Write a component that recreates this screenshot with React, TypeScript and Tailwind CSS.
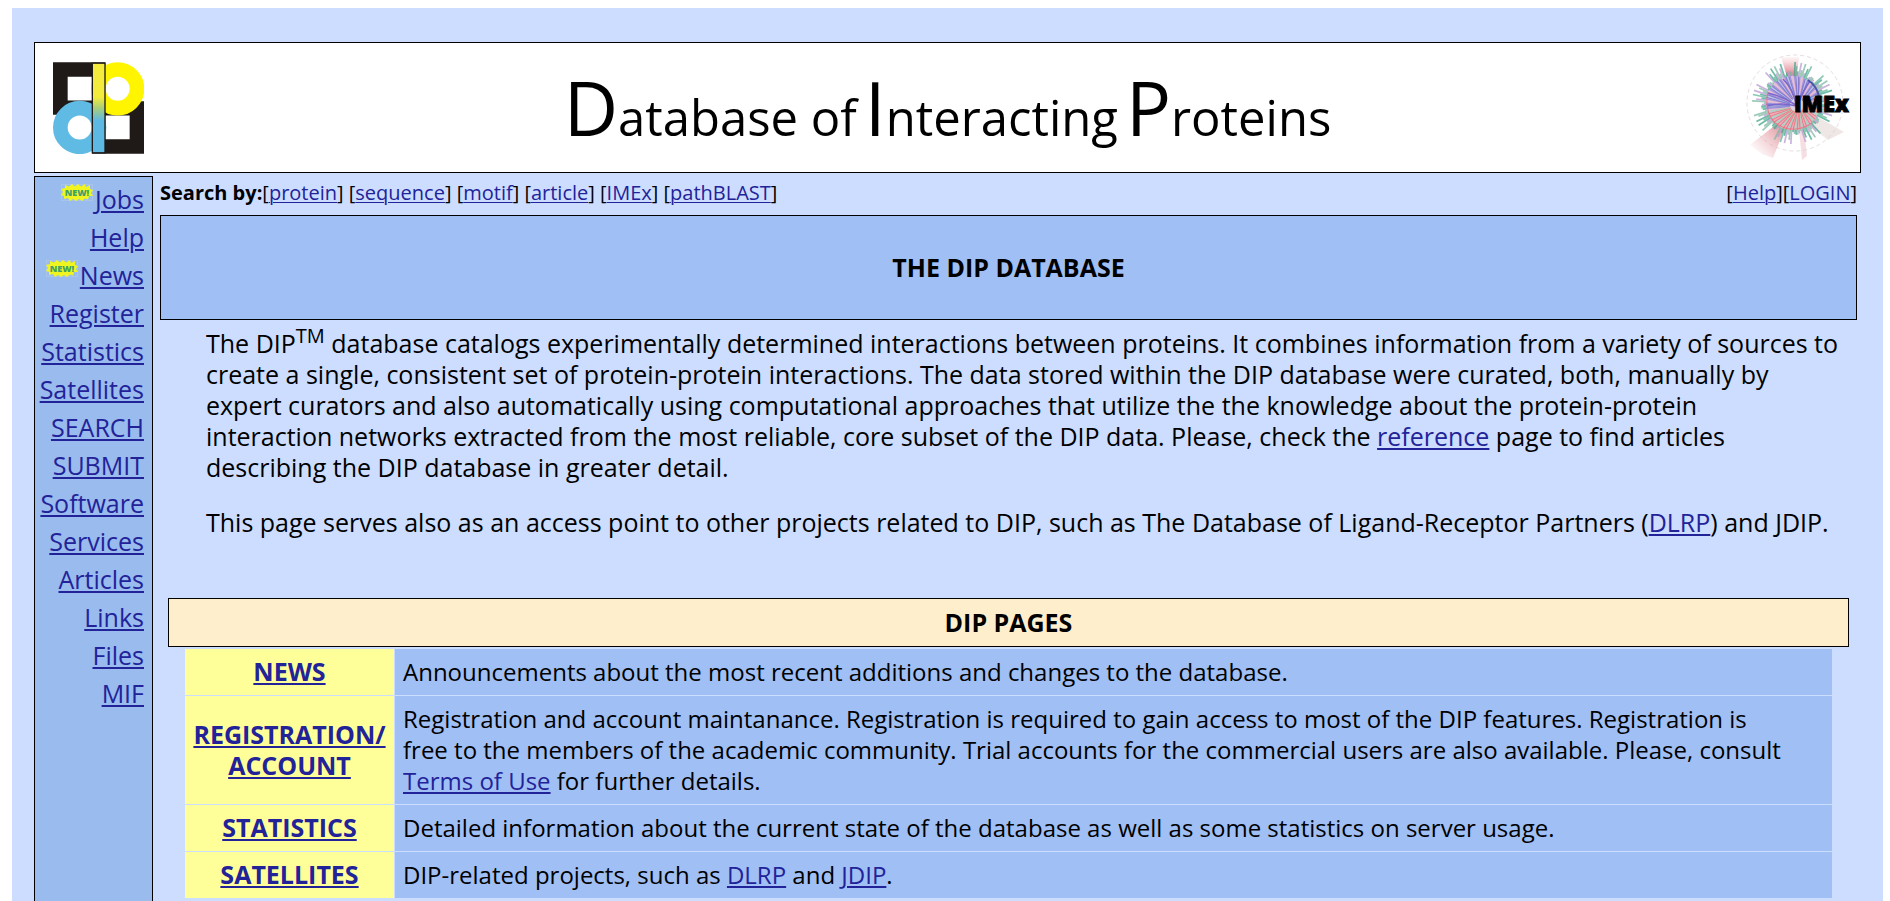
import type { ReactNode } from "react";

const menu = [
  { label: "Jobs", isNew: true },
  { label: "Help" },
  { label: "News", isNew: true },
  { label: "Register" },
  { label: "Statistics" },
  { label: "Satellites" },
  { label: "SEARCH" },
  { label: "SUBMIT" },
  { label: "Software" },
  { label: "Services" },
  { label: "Articles" },
  { label: "Links" },
  { label: "Files" },
  { label: "MIF" },
];

const searches = ["protein", "sequence", "motif", "article", "IMEx", "pathBLAST"];

function A({ children, thin }: { children: ReactNode; thin?: boolean }) {
  return (
    <a
      href="#"
      className={`text-[#222299] underline underline-offset-2 ${thin ? "decoration-1" : "decoration-2"}`}
    >
      {children}
    </a>
  );
}

const pages = [
  {
    name: "NEWS",
    text: "Announcements about the most recent additions and changes to the database.",
  },
  {
    name: "REGISTRATION/ ACCOUNT",
    text: (
      <>
        Registration and account maintanance. Registration is required to gain access to most of the DIP features.
        Registration is <br className="max-xl:hidden" />
        free to the members of the academic community. Trial accounts for the commercial users are also available.
        Please, consult <br className="max-xl:hidden" />
        <A>Terms of Use</A> for further details.
      </>
    ),
  },
  {
    name: "STATISTICS",
    text: "Detailed information about the current state of the database as well as some statistics on server usage.",
  },
  {
    name: "SATELLITES",
    text: (
      <>
        DIP-related projects, such as <A>DLRP</A> and <A>JDIP</A>.
      </>
    ),
  },
];

function DipLogo() {
  return (
    <svg viewBox="0 0 273 275" className="h-[92px] w-[91px]" role="img" aria-label="DIP">
      <defs>
        <linearGradient id="dip-bar" x1="0" y1="0" x2="0" y2="1">
          <stop offset="0.38" stopColor="#f3ec3c" />
          <stop offset="0.5" stopColor="#a9cf77" />
          <stop offset="0.64" stopColor="#5db9e3" />
        </linearGradient>
      </defs>
      <path fill="#1f1a17" fillRule="evenodd" d="M0 0H157V158H0ZM44 44V115H117V44Z" />
      <path fill="#1f1a17" fillRule="evenodd" d="M117 117H273V275H117ZM157 160V231H230V160Z" />
      <circle cx="194" cy="80" r="58" fill="#fff" stroke="#fff500" strokeWidth="44" />
      <circle cx="80" cy="196" r="58" fill="#fff" stroke="#5fbbe4" strokeWidth="44" />
      <rect x="118" y="3" width="38" height="269" fill="url(#dip-bar)" stroke="#1f1a17" strokeWidth="4" />
    </svg>
  );
}

const rayColors = ["#3fa58a", "#7fb8a4", "#e5737f", "#b99ad0", "#2f8f7c", "#8fa8b8", "#66b59b"];
const coreColors = ["#8b7fd6", "#c79be0", "#f08a9c", "#a7c6e8", "#6f62c4", "#e9b7c9", "#9ad0b8"];
const lowerColors = ["#f0606c", "#c9b6dd", "#d94f6b", "#a9cdb9", "#f4a6a6"];

// Spokes of the interaction wheel, one every three degrees.
const spokes = Array.from({ length: 120 }, (_, i) => {
  const angle = (i * 3 * Math.PI) / 180;
  const down = Math.sin(angle) > 0.3;
  return {
    x: Math.cos(angle),
    y: Math.sin(angle),
    outer: 29 + ((i * i * 7 + i * 5) % 15),
    ray: rayColors[(i * i + i * 5) % rayColors.length],
    core: down
      ? lowerColors[(i * i + i * 3) % lowerColors.length]
      : coreColors[(i * i + i * 3) % coreColors.length],
  };
});

function ImexLogo() {
  return (
    <svg viewBox="0 0 116 116" className="h-[116px] w-[116px]" role="img" aria-label="IMEx">
      <defs>
        <filter id="soft">
          <feGaussianBlur stdDeviation="0.7" />
        </filter>
        <linearGradient id="fade-up" x1="0" y1="1" x2="0" y2="0">
          <stop offset="0.3" stopColor="#dc6f80" stopOpacity="0.8" />
          <stop offset="1" stopColor="#e8a0a8" stopOpacity="0.1" />
        </linearGradient>
        <linearGradient id="fade-down" x1="1" y1="0" x2="0" y2="1">
          <stop offset="0.2" stopColor="#dc8790" stopOpacity="0.7" />
          <stop offset="0.9" stopColor="#e8a0a8" stopOpacity="0" />
        </linearGradient>
      </defs>
      <circle cx="53" cy="53" r="48" fill="none" stroke="#e6dee0" strokeDasharray="4 3" />
      <g filter="url(#soft)">
        <path d="M46 30 39 7 57 7 54 30Z" fill="url(#fade-up)" />
        <path d="M36 73 8 95 20 104 31 108 42 80Z" fill="url(#fade-down)" />
        <path d="M57 80 60 110 65 106 62 80Z" fill="#eec0c6" opacity="0.5" />
        <path d="M74 66 102 82 86 90 68 76Z" fill="#d8c4c0" opacity="0.4" />
        {spokes.map((s, i) => (
          <line
            key={i}
            x1={51 + s.x * 23}
            y1={53 + s.y * 23}
            x2={51 + s.x * s.outer}
            y2={53 + s.y * s.outer}
            stroke={s.ray}
            strokeWidth="1.7"
            opacity="0.75"
          />
        ))}
        <circle cx="51" cy="53" r="27" fill="#ddd0ee" />
        {spokes.map((s, i) => (
          <line
            key={i}
            x1={55 + s.x * 7}
            y1={55 + s.y * 7}
            x2={51 + s.x * 27}
            y2={53 + s.y * 27}
            stroke={s.core}
            strokeWidth="1.3"
            opacity="0.75"
          />
        ))}
        <path
          d="M26 43Q40 46 54 55M41 29Q52 40 54 55M68 31Q60 42 56 55M25 56Q40 52 54 56"
          fill="none"
          stroke="#7a68cc"
          strokeWidth="1.6"
        />
        <path d="M66 30Q75 36 77 47" fill="none" stroke="#4a57a8" strokeWidth="2" />
        <path d="M26 42Q22 60 32 72Q50 86 70 73" fill="none" stroke="#ee6a78" strokeWidth="1.2" opacity="0.7" />
      </g>
      <text x="52" y="62" fontSize="22" fontWeight="800" fontFamily="Open Sans, sans-serif" stroke="#000">
        IMEx
      </text>
    </svg>
  );
}

function NewBadge() {
  return (
    <svg
      viewBox="0 0 32 17"
      className="mt-0.5 mr-0.5 inline-block h-[17px] w-[32px] align-text-top"
      role="img"
      aria-label="New"
    >
      <rect x="0.5" y="0.5" width="31" height="16" fill="none" stroke="#a8c4e6" />
      <path
        fill="#f0f520"
        d="M0 5 4 4 4 1 8 2.500 11 0 14 2.500 17 0 20 2.500 24 0 25 3 29 1 29 5 32 6 30 9 32 12 28 12 27 15.500 24 14.500 21 17 18 15 15 17 12 15 9 17 7 14 3 15 3 12 0 11 2 8Z"
      />
      <text x="16" y="12" textAnchor="middle" fontSize="9" fontWeight="800" fill="#3fa06a">
        NEW!
      </text>
    </svg>
  );
}

export default function App() {
  return (
    <div className="flex min-h-screen flex-col bg-white pt-2 pr-[7px] pl-3 font-['Open_Sans','Noto_Sans',sans-serif] text-[25px] leading-[31px] text-black">
      <div className="flex flex-1 flex-col bg-[#ccddff] px-[22px] pt-[34px]">
        <header className="grid grid-cols-[1fr_auto_1fr] items-center border border-black bg-white">
          <div className="pl-[18px]">
            <DipLogo />
          </div>
          <h1 className="flex h-[129px] items-baseline pt-[14px] text-[49px] leading-[100px]">
            <span className="text-[75px]">D</span>atabase of
            <span className="ml-2 text-[75px]">I</span>nteracting
            <span className="ml-2 text-[75px]">P</span>roteins
          </h1>
          <div className="flex justify-end pr-0.5">
            <ImexLogo />
          </div>
        </header>

        <div className="mt-[3px] flex flex-1 items-stretch">
          <nav className="w-[119px] shrink-0 border border-b-0 border-black bg-[#99bbee] pt-[3px] pr-2 text-right">
            <ul>
              {menu.map((item) => (
                <li key={item.label} className="h-[38px] leading-[38px] whitespace-nowrap">
                  {item.isNew && <NewBadge />}
                  <A>{item.label}</A>
                </li>
              ))}
            </ul>
          </nav>

          <main className="min-w-0 flex-1 pr-1 pl-[7px]">
            <div className="flex justify-between pt-px pb-[7px] text-[20px]">
              <div>
                <b>Search by:</b>
                {searches.map((s, i) => (
                  <span key={s}>
                    {i > 0 && " "}[<A thin>{s}</A>]
                  </span>
                ))}
              </div>
              <div>
                [<A thin>Help</A>][<A thin>LOGIN</A>]
              </div>
            </div>

            <h2 className="border border-black bg-[#a0bff5] py-[36px] text-center font-bold">THE DIP DATABASE</h2>

            <div className="pt-2 pr-4 pl-[46px]">
              <p>
                The DIP<sup className="text-[20px] leading-none">TM</sup> database catalogs experimentally determined
                interactions between proteins. It combines information from a variety of sources to{" "}
                <br className="max-xl:hidden" />
                create a single, consistent set of protein-protein interactions. The data stored within the DIP
                database were curated, both, manually by <br className="max-xl:hidden" />
                expert curators and also automatically using computational approaches that utilize the the knowledge
                about the protein-protein <br className="max-xl:hidden" />
                interaction networks extracted from the most reliable, core subset of the DIP data. Please, check the{" "}
                <A>reference</A> page to find articles <br className="max-xl:hidden" />
                describing the DIP database in greater detail.
              </p>
              <p className="mt-6">
                This page serves also as an access point to other projects related to DIP, such as The Database of
                Ligand-Receptor Partners (<A>DLRP</A>) and JDIP.
              </p>
            </div>

            <section className="mt-[60px] px-2">
              <h2 className="border border-black bg-[#ffeecc] py-2 text-center font-bold">DIP PAGES</h2>
              <div className="px-[17px] pt-px">
                <table className="w-full border-separate border-spacing-x-0 border-spacing-y-px">
                  <tbody>
                    {pages.map((page) => (
                      <tr key={page.name}>
                        <th
                          scope="row"
                          className="w-[210px] border-r border-[#ccddff] bg-[#ffff99] px-2 pt-[7px] pb-2 font-bold"
                        >
                          <A>{page.name}</A>
                        </th>
                        <td className="bg-[#a0bff5] pt-[7px] pr-1 pb-2 pl-2 text-[24px]">{page.text}</td>
                      </tr>
                    ))}
                  </tbody>
                </table>
              </div>
            </section>
          </main>
        </div>
      </div>
    </div>
  );
}
